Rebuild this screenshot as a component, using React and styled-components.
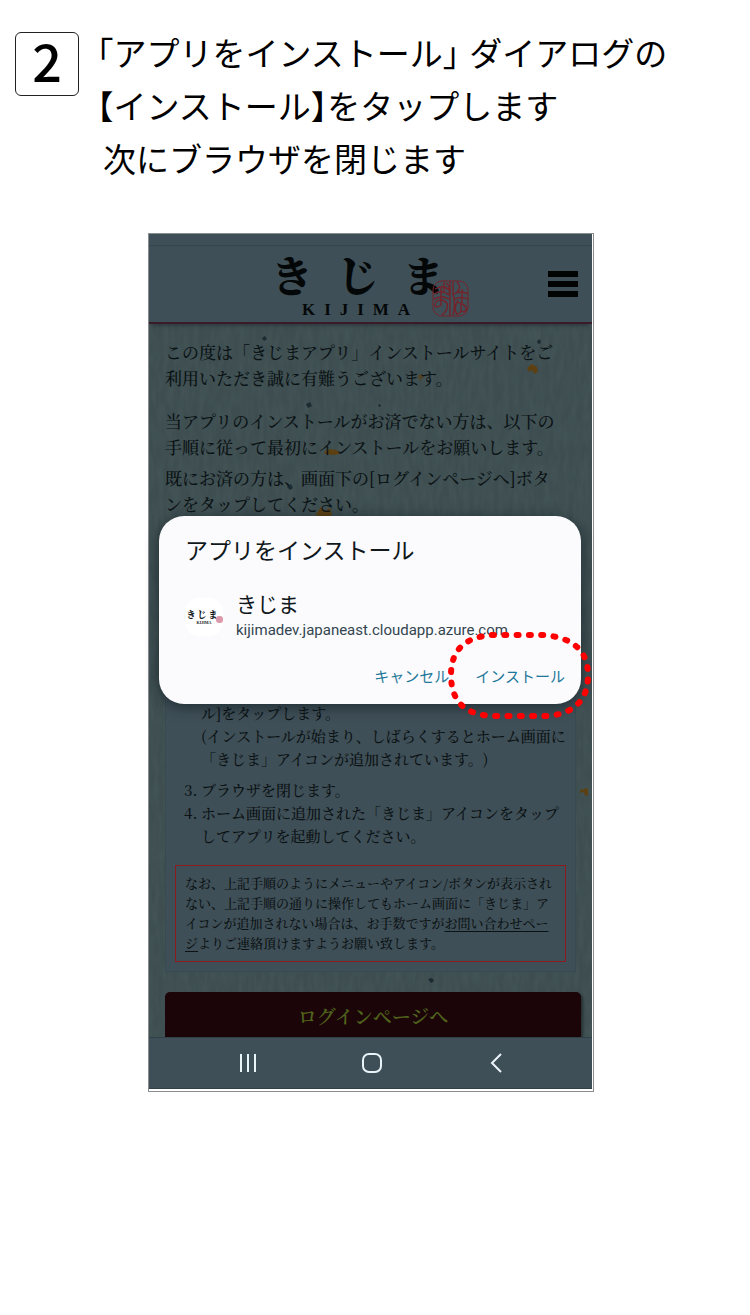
import styled, { createGlobalStyle } from "styled-components"

const COLORS = {
  INK: "#0b1214",
  SLATE: "#3f4f57",
  PAPER: "#3d4d50",
  CRIMSON: "#8c1a1e",
  LINK: "#1f7899",
  MARK: "#ff0000",
};

const FONTS = {
  SANS: `"Noto Sans CJK JP", sans-serif`,
  SERIF: `"Noto Serif CJK JP", "Noto Sans CJK JP", serif`,
  LATIN: `"Liberation Serif", serif`,
  ROBOTO: `Roboto, "Noto Sans CJK JP", sans-serif`,
};

const GlobalStyle = createGlobalStyle`
  *, *::before, *::after {
    box-sizing: border-box;
  }

  body {
    margin: 0;
    background-color: #ffffff;
    color: #000000;
    font-family: ${FONTS.SANS};
  }

  h1, h2, p, ol {
    margin: 0;
    padding: 0;
  }

  button {
    border: 0;
    padding: 0;
    background: none;
    font: inherit;
    color: inherit;
    cursor: pointer;
  }
`;

const Page = styled.div`
  padding: 26px 23px 32px 15px;
`;

const StepHeader = styled.header`
  display: flex;
  align-items: flex-start;
  gap: 18px;
`;

const StepNumber = styled.span`
  display: flex;
  flex: none;
  align-items: center;
  justify-content: center;
  width: 64px;
  height: 64px;
  margin-top: 6px;
  padding-bottom: 8px;
  border: 1px solid #222222;
  border-radius: 6px;
  font-size: 52px;
  font-weight: 500;
  line-height: 56px;
`;

const StepTitle = styled.h1`
  font-size: 33px;
  font-weight: 400;
  line-height: 53px;
  font-feature-settings: "halt";
`;

const TitleLine = styled.span`
  display: flex;
  flex-wrap: wrap;
  column-gap: 10px;
  padding-left: ${({ $indent }) => ($indent ? "6px" : "0")};
`;

const Phone = styled.section`
  position: relative;
  width: 100%;
  max-width: 446px;
  margin: 48px auto 0;
  padding: 0 1px 2px 0;
  border: 1px solid #8b8e90;
`;

const StatusBar = styled.div`
  height: 12px;
  background-color: ${COLORS.SLATE};
  border-bottom: 1px solid #35464d;
`;

const SiteHeader = styled.div`
  position: relative;
  display: flex;
  align-items: center;
  justify-content: flex-end;
  height: 78px;
  padding-right: 14px;
  background-color: ${COLORS.SLATE};
  border-bottom: 2px solid #3a1c29;
  box-shadow: 0 4px 4px -3px rgba(20, 20, 30, 0.5);
  z-index: 1;
`;

const Brand = styled.div`
  display: flex;
  align-items: flex-end;
  height: 76px;
  margin-right: 79px;
  padding-bottom: 5px;
  color: #040707;
`;

const BrandText = styled.div`
  display: flex;
  flex-direction: column;
  align-items: flex-end;
`;

const BrandKana = styled.div`
  display: flex;
  gap: 24px;
  margin-right: -13px;
  font-family: ${FONTS.SERIF};
  font-size: 42px;
  font-weight: 900;
  line-height: 56px;
`;

const BrandRoman = styled.div`
  display: flex;
  justify-content: space-between;
  width: 108px;
  margin-right: 22px;
  font-family: ${FONTS.LATIN};
  font-size: 17px;
  font-weight: 700;
  line-height: 15px;
`;

const MenuButton = styled.button`
  display: flex;
  flex-direction: column;
  gap: 4px;
  width: 30px;
`;

const MenuBar = styled.span`
  width: 100%;
  height: 6px;
  background-color: #020404;
`;

const Main = styled.main`
  position: relative;
  height: 713px;
  padding: 15px 11px 0 16px;
  overflow: hidden;
  background-color: ${COLORS.PAPER};
  color: ${COLORS.INK};
  font-family: ${FONTS.SERIF};
  text-spacing-trim: space-all;
`;

const Paper = styled.svg`
  position: absolute;
  inset: 0;
  width: 100%;
  height: 100%;
`;

const Body = styled.div`
  position: relative;
`;

const Paragraph = styled.p`
  margin-bottom: ${({ $wide }) => ($wide ? "17px" : "5px")};
  font-size: 17px;
  font-weight: 500;
  line-height: 26px;
`;

const Panel = styled.div`
  margin: 13px 5px 20px 0;
  padding: 170px 0 9px;
  background-color: ${COLORS.SLATE};
  border: 1px solid #394a52;
`;

const Steps = styled.ol`
  list-style: none;
  font-size: 15px;
  font-weight: 500;
  line-height: 23px;
`;

const Step = styled.li`
  display: grid;
  grid-template-columns: 17px 1fr;
  padding-left: 18px;
  margin-bottom: ${({ $spaced }) => ($spaced ? "8px" : "0")};
`;

const Note = styled.p`
  margin: 18px 9px 0;
  padding: 7px 0 8px 9px;
  border: 1px solid ${COLORS.CRIMSON};
  font-size: 13px;
  font-weight: 500;
  line-height: 20px;
`;

const NoteLink = styled.a`
  color: inherit;
  text-underline-offset: 3px;
`;

const LoginButton = styled.button`
  display: block;
  width: 100%;
  height: 60px;
  padding-bottom: 14px;
  border-radius: 5px;
  background-color: #1b0508;
  box-shadow: 2px 2px 3px rgba(0, 0, 0, 0.4);
  color: #4f621c;
  font-size: 19px;
  font-weight: 600;
`;

const NavBar = styled.nav`
  display: flex;
  align-items: center;
  justify-content: space-around;
  height: 52px;
  padding: 0 34px 0 38px;
  background-color: ${COLORS.SLATE};
  border-top: 1px solid #2f4047;
  border-bottom: 1px solid #2f4047;
`;

const NavButton = styled.button`
  display: flex;
  color: #e8f4f8;
`;

const Dialog = styled.section`
  position: absolute;
  z-index: 2;
  top: 282px;
  left: 10px;
  right: 12px;
  height: 188px;
  padding: 16px 16px 0 26px;
  border-radius: 25px;
  background-color: #fbfbfe;
  box-shadow: 0 3px 14px rgba(10, 20, 26, 0.6);
  color: #10181b;
`;

const DialogTitle = styled.h2`
  font-size: 23px;
  font-weight: 400;
  line-height: 34px;
`;

const AppRow = styled.div`
  display: flex;
  align-items: center;
  gap: 13px;
  margin-top: 24px;
`;

const AppIcon = styled.div`
  display: flex;
  flex: none;
  flex-direction: column;
  align-items: center;
  justify-content: center;
  position: relative;
  width: 38px;
  height: 38px;
  border-radius: 14px;
  background-color: #ffffff;
`;

const AppIconKana = styled.span`
  display: flex;
  gap: 2px;
  padding-right: 4px;
  font-family: ${FONTS.SERIF};
  font-size: 9px;
  font-weight: 900;
  line-height: 10px;
`;

const AppIconRoman = styled.span`
  font-family: ${FONTS.LATIN};
  font-size: 4px;
  font-weight: 700;
  line-height: 5px;
`;

const AppIconSeal = styled.span`
  position: absolute;
  right: 0;
  bottom: 13px;
  width: 7px;
  height: 7px;
  border-radius: 3px;
  background-color: rgba(205, 110, 135, 0.7);
`;

const AppName = styled.p`
  font-size: 21px;
  line-height: 26px;
`;

const AppUrl = styled.p`
  color: #33464f;
  font-family: ${FONTS.ROBOTO};
  font-size: 15px;
  line-height: 28px;
`;

const Actions = styled.div`
  display: flex;
  justify-content: flex-end;
  gap: 26px;
  margin-top: 20px;
  color: ${COLORS.LINK};
  font-size: 15px;
  line-height: 24px;
`;

const InstallButton = styled.button`
  position: relative;
`;

const Highlight = styled.svg`
  position: absolute;
  top: -34px;
  left: -28px;
  pointer-events: none;
`;

function Seal() {
  return (
    <svg width="37" height="37" viewBox="0 0 37 37" fill="none" stroke="#75232a" strokeWidth="1.4" aria-hidden="true">
      <rect x="1" y="1" width="35" height="35" rx="9" strokeWidth="1" />
      <path d="M12 2v9M18 1v35M3 9q9 -5 14 1M2 14q8 -5 15 1M2 19q8 -4 15 0M9 8v17q-5 4 -6 0q1 -6 8 -5q7 3 3 11l-4 4" />
      <path d="M14 3q5 4 3 11M21 2v12q3 10 0 21M25 2q5 5 0 10M22 14q7 -4 14 0M23 19q6 -3 13 0M30 9v15M26 20q-5 9 -1 14q5 0 4 -8q0 -5 -5 -3M30 24q5 2 4 6q-3 4 -5 0" />
    </svg>
  );
}

// washi fibres with a few flecks of gold leaf
function WashiPaper() {
  return (
    <Paper aria-hidden="true">
      <filter id="fibres" x="0" y="0" width="100%" height="100%">
        <feTurbulence type="fractalNoise" baseFrequency="0.2 0.05" numOctaves="2" seed="4" />
        <feColorMatrix values="0 0 0 0 0.14  0 0 0 0 0.2  0 0 0 0 0.2  0.9 0 0 0 -0.25" />
      </filter>
      <rect width="100%" height="100%" filter="url(#fibres)" opacity="0.3" />
      <g fill="#5c4012">
        <path d="M378 44l5 -4l5 3l1 5l-4 2l-2 -4l-3 2z" />
        <path d="M174 129l6 -4l8 1l3 4l-8 1z" />
        <path d="M166 191l6 -8l4 4l5 -3l2 7l-8 3l-4 -2z" />
        <path d="M431 466l8 -2v7l-3 1l-1 -4l-4 1z" />
        <path d="M268 52l4 -2l3 3l-4 4z" opacity="0.6" />
      </g>
      <g fill="#1c2a32">
        <path d="M113 14l3 -2l2 3l-3 2z" />
        <path d="M157 80l4 -2l2 4l-4 2z" />
        <path d="M138 163l4 -3l2 4l-3 2z" />
        <path d="M388 17l3 -2l1 4l-3 1z" />
        <path d="M279 655l4 -1l2 3l-3 2z" />
        <path d="M229 81l2 -1l1 2l-2 1z" />
      </g>
    </Paper>
  );
}

function InstallDialog() {
  return (
    <Dialog role="dialog" aria-labelledby="install-title">
      <DialogTitle id="install-title">アプリをインストール</DialogTitle>
      <AppRow>
        <AppIcon>
          <AppIconKana>
            <span>き</span>
            <span>じ</span>
            <span>ま</span>
          </AppIconKana>
          <AppIconRoman>KIJIMA</AppIconRoman>
          <AppIconSeal />
        </AppIcon>
        <div>
          <AppName>きじま</AppName>
          <AppUrl>kijimadev.japaneast.cloudapp.azure.com</AppUrl>
        </div>
      </AppRow>
      <Actions>
        <button type="button">キャンセル</button>
        <InstallButton type="button">
          インストール
          <Highlight width="146" height="92" viewBox="0 0 146 92" aria-hidden="true">
            <path
              d="M45 5H97Q141 9 141 45Q141 82 101 86H45Q4 84 4 45Q4 8 45 5Z"
              fill="none"
              stroke={COLORS.MARK}
              strokeWidth="6"
              strokeLinecap="round"
              strokeDasharray="2 10.3"
            />
          </Highlight>
        </InstallButton>
      </Actions>
    </Dialog>
  );
}

function App() {
  return (
    <Page>
      <GlobalStyle />
      <StepHeader>
        <StepNumber>2</StepNumber>
        <StepTitle>
          <TitleLine>
            <span>「アプリをインストール」</span>
            <span>ダイアログの</span>
          </TitleLine>
          <TitleLine>【インストール】をタップします</TitleLine>
          <TitleLine $indent>次にブラウザを閉じます</TitleLine>
        </StepTitle>
      </StepHeader>
      <Phone>
        <StatusBar />
        <SiteHeader>
          <Brand>
            <BrandText>
              <BrandKana>
                <span>き</span>
                <span>じ</span>
                <span>ま</span>
              </BrandKana>
              <BrandRoman>
                <span>K</span>
                <span>I</span>
                <span>J</span>
                <span>I</span>
                <span>M</span>
                <span>A</span>
              </BrandRoman>
            </BrandText>
            <Seal />
          </Brand>
          <MenuButton type="button" aria-label="メニュー">
            <MenuBar />
            <MenuBar />
            <MenuBar />
          </MenuButton>
        </SiteHeader>
        <Main>
          <WashiPaper />
          <Body>
            <Paragraph $wide>
              この度は「きじまアプリ」インストールサイトをご
              <br />
              利用いただき誠に有難うございます。
            </Paragraph>
            <Paragraph>
              当アプリのインストールがお済でない方は、以下の
              <br />
              手順に従って最初にインストールをお願いします。
            </Paragraph>
            <Paragraph>
              既にお済の方は、画面下の[ログインページへ]ボタ
              <br />
              ンをタップしてください。
            </Paragraph>
            <Panel>
              <Steps>
                <Step $spaced>
                  <span />
                  <span>
                    ル]をタップします。
                    <br />
                    (インストールが始まり、しばらくするとホーム画面に
                    <br />
                    「きじま」アイコンが追加されています。)
                  </span>
                </Step>
                <Step>
                  <span>3.</span>
                  <span>ブラウザを閉じます。</span>
                </Step>
                <Step>
                  <span>4.</span>
                  <span>
                    ホーム画面に追加された「きじま」アイコンをタップ
                    <br />
                    してアプリを起動してください。
                  </span>
                </Step>
              </Steps>
              <Note>
                なお、上記手順のようにメニューやアイコン/ボタンが表示され
                <br />
                ない、上記手順の通りに操作してもホーム画面に「きじま」ア
                <br />
                イコンが追加されない場合は、お手数ですが
                <NoteLink href="#contact">
                  お問い合わせペー
                  <br />
                  ジ
                </NoteLink>
                よりご連絡頂けますようお願い致します。
              </Note>
            </Panel>
            <LoginButton type="button">ログインページへ</LoginButton>
          </Body>
        </Main>
        <NavBar>
          <NavButton type="button" aria-label="履歴">
            <svg width="20" height="20" viewBox="0 0 20 20" stroke="currentColor" strokeWidth="2">
              <path d="M2 1v18M9 1v18M16 1v18" />
            </svg>
          </NavButton>
          <NavButton type="button" aria-label="ホーム">
            <svg width="20" height="20" viewBox="0 0 20 20" fill="none" stroke="currentColor" strokeWidth="2">
              <rect x="1" y="1" width="18" height="18" rx="6" />
            </svg>
          </NavButton>
          <NavButton type="button" aria-label="戻る">
            <svg width="20" height="20" viewBox="0 0 20 20" fill="none" stroke="currentColor" strokeWidth="2">
              <path d="M15 1L6 10l9 9" />
            </svg>
          </NavButton>
        </NavBar>
        <InstallDialog />
      </Phone>
    </Page>
  );
}

export default App
